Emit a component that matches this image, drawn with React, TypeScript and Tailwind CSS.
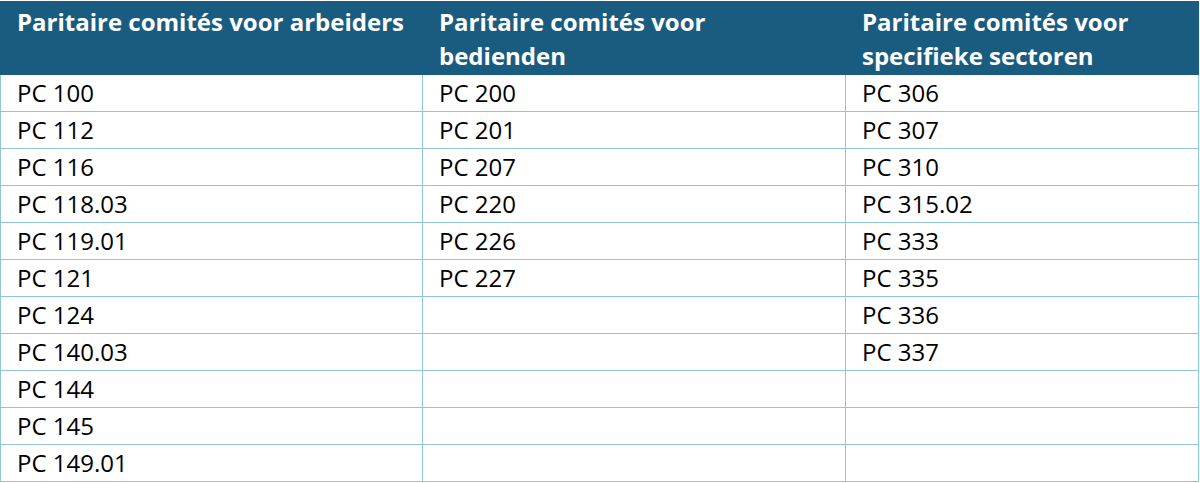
const columns = [
  {
    title: "Paritaire comités voor arbeiders",
    items: ["PC 100", "PC 112", "PC 116", "PC 118.03", "PC 119.01", "PC 121", "PC 124", "PC 140.03", "PC 144", "PC 145", "PC 149.01"],
  },
  {
    title: "Paritaire comités voor bedienden",
    items: ["PC 200", "PC 201", "PC 207", "PC 220", "PC 226", "PC 227"],
  },
  {
    title: "Paritaire comités voor specifieke sectoren",
    items: ["PC 306", "PC 307", "PC 310", "PC 315.02", "PC 333", "PC 335", "PC 336", "PC 337"],
  },
];

const rowCount = 11;

export default function App() {
  return (
    <div className="w-[1200px] h-[483px] bg-white pt-px font-['Open_Sans',sans-serif]">
      <table className="w-[1199px] table-fixed border-collapse">
        <colgroup>
          <col className="w-[422px]" />
          <col className="w-[423px]" />
          <col />
        </colgroup>
        <thead>
          <tr className="bg-[#1a5c80] h-[73px]">
            {columns.map((c) => (
              <th
                key={c.title}
                className="border border-[#1a5c80] pl-4 pr-3 pt-[3px] pb-0 text-left align-top text-[24px] font-bold leading-[34px] text-white"
              >
                {c.title}
              </th>
            ))}
          </tr>
        </thead>
        <tbody>
          {Array.from({ length: rowCount }, (_, r) => (
            <tr key={r} className="h-[37px]">
              {columns.map((c, ci) => (
                <td
                  key={ci}
                  className="border border-[#93c5d8] px-4 py-0 text-[24px] leading-[36px] text-black"
                >
                  {c.items[r] ?? ""}
                </td>
              ))}
            </tr>
          ))}
        </tbody>
      </table>
    </div>
  );
}
